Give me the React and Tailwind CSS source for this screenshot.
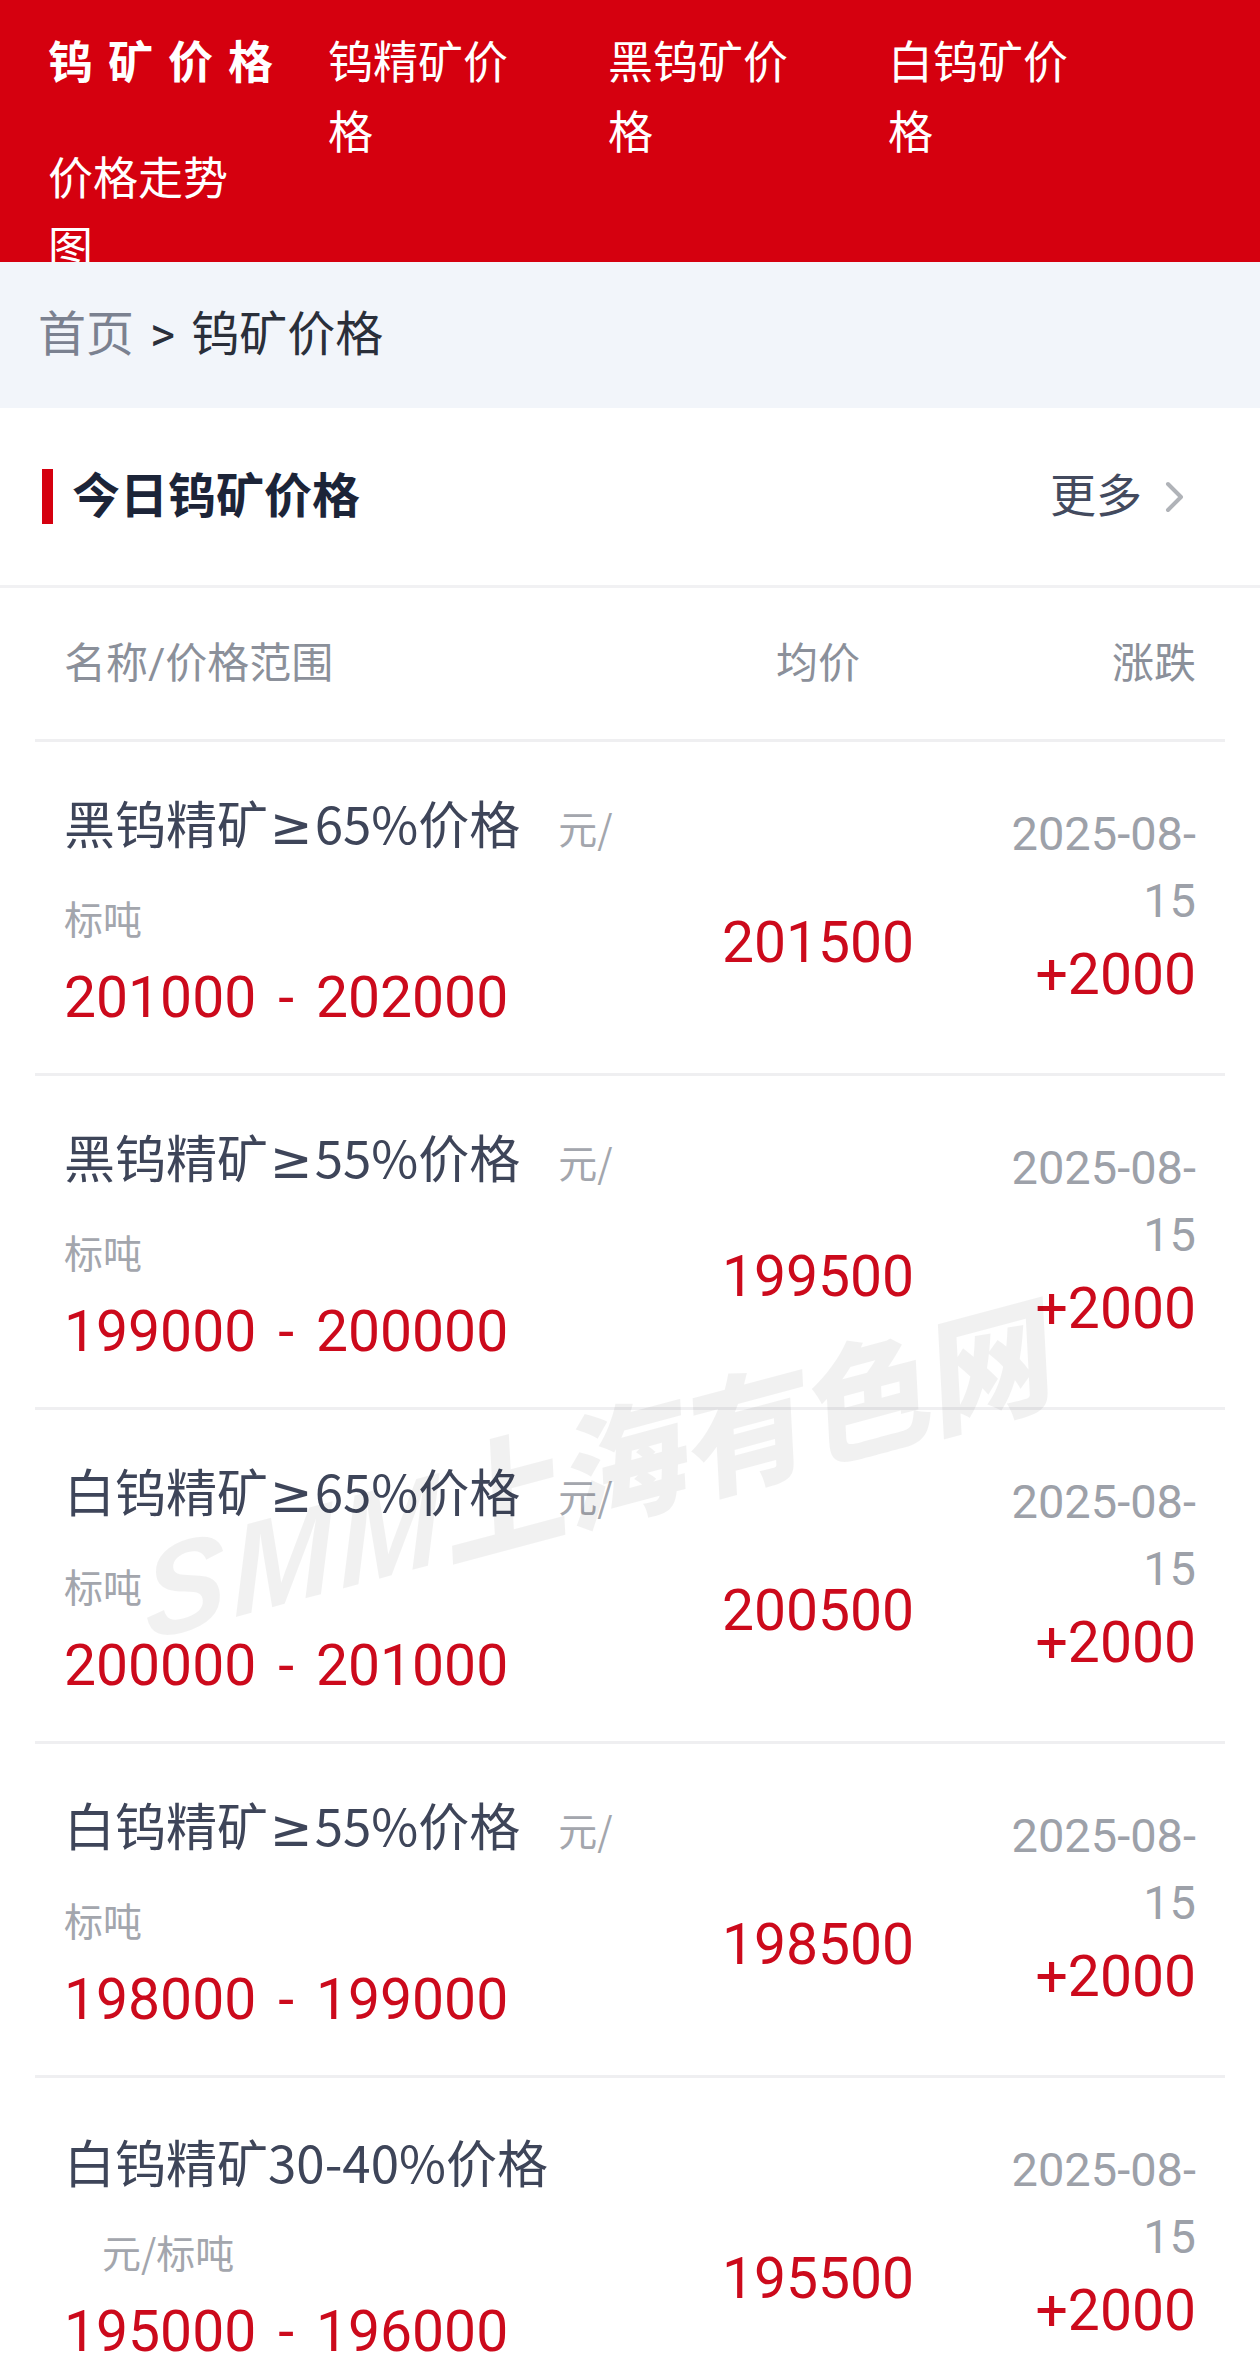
import React from "react";

const font = { fontFamily: 'Roboto, "Noto Sans CJK SC", "Noto Sans", sans-serif' };
const cjk = { fontFamily: '"Noto Sans CJK SC", "Noto Sans", sans-serif' };
const geFont = { fontFamily: '"DejaVu Sans", "Noto Sans", sans-serif' };

const navItems = ["钨精矿价格", "黑钨矿价格", "白钨矿价格", "价格走势图"];

const rows = [
  { pre: "黑钨精矿", ge: true, post: "65%价格", lo: "201000", hi: "202000", avg: "201500" },
  { pre: "黑钨精矿", ge: true, post: "55%价格", lo: "199000", hi: "200000", avg: "199500" },
  { pre: "白钨精矿", ge: true, post: "65%价格", lo: "200000", hi: "201000", avg: "200500" },
  { pre: "白钨精矿", ge: true, post: "55%价格", lo: "198000", hi: "199000", avg: "198500" },
  { pre: "白钨精矿", ge: false, post: "30-40%价格", lo: "195000", hi: "196000", avg: "195500" },
];

export default function App() {
  return (
    <div className="relative w-[1260px] bg-white overflow-hidden" style={font}>
      {/* Top nav */}
      <div className="h-[262px] overflow-hidden bg-[#d5000f] pt-[29px] pl-[48px]">
        <div className="flex flex-wrap">
          <div className="h-[116px] w-[220px] mr-[60px] whitespace-nowrap text-[45px] leading-[70px] font-bold tracking-[15px] text-white">
            钨矿价格
          </div>
          {navItems.map((t) => (
            <div
              key={t}
              className="h-[116px] w-[220px] mr-[60px] text-[45px] leading-[70px] text-white"
            >
              {t}
            </div>
          ))}
        </div>
      </div>

      {/* Breadcrumb */}
      <div className="flex h-[146px] items-center bg-[#f2f5fa] pl-[38px] text-[48px]">
        <span className="text-[#7b8190]">首页</span>
        <span className="mx-[16px] text-[#2a2f3a]">&gt;</span>
        <span className="text-[#2a2f3a]">钨矿价格</span>
      </div>

      {/* Section title */}
      <div className="flex h-[180px] items-center justify-between border-b-[3px] border-[#f1f1f3] pl-[42px] pr-[74px]">
        <div className="flex items-center">
          <div className="h-[55px] w-[11px] bg-[#d5000f]" />
          <div className="ml-[19px] text-[48px] font-bold text-[#1c2438]">今日钨矿价格</div>
        </div>
        <div className="flex items-center">
          <span className="text-[46px] text-[#434a5e]">更多</span>
          <svg className="ml-[22px]" width="22" height="32" viewBox="0 0 22 32" fill="none">
            <path d="M4 3 L17 16 L4 29" stroke="#b0b3b8" strokeWidth="4" strokeLinecap="round" strokeLinejoin="round" />
          </svg>
        </div>
      </div>

      {/* Table */}
      <div className="mx-[35px]">
        <div className="flex h-[154px] items-center border-b-[3px] border-[#efeff1] px-[29px] text-[42px] text-[#8b909a]">
          <div className="w-[556px]">名称/价格范围</div>
          <div className="flex-1 pl-[20px] text-center">均价</div>
          <div className="w-[200px] text-right">涨跌</div>
        </div>

        {rows.map((r) => (
          <div
            key={r.pre + r.post}
            className="flex h-[334px] items-center border-b-[3px] border-[#efeff1] px-[29px]"
          >
            <div className="w-[556px]">
              <div className="text-[51px] leading-[85px] text-[#3e4559]" style={cjk}>
                {r.pre}
                {r.ge && (
                  <span className="ml-[2px] mr-[2px]" style={geFont}>
                    ≥
                  </span>
                )}
                {r.post}
                <span className="ml-[38px] text-[39px] text-[#a3a6ad]">元/标吨</span>
              </div>
              <div className="whitespace-nowrap text-[57px] leading-[75px] text-[#cc0a1c]">
                {r.lo}
                <span className="mx-[22px]">-</span>
                {r.hi}
              </div>
            </div>
            <div className="mt-[70px] flex-1 pl-[20px] text-center text-[57px] leading-[84px] text-[#cc0a1c]">
              {r.avg}
            </div>
            <div className="w-[200px] text-right">
              <div className="text-[47px] leading-[67px] text-[#9da1a9]">2025-08-15</div>
              <div className="text-[57px] leading-[82px] text-[#cc0a1c]">+2000</div>
            </div>
          </div>
        ))}
      </div>

      {/* Watermark */}
      <div
        className="pointer-events-none absolute left-[128px] top-[1398px] origin-center -rotate-[15deg] -skew-x-[12deg] whitespace-nowrap text-[126px] font-black leading-[130px] text-black/[0.055]"
        style={{ fontFamily: '"Liberation Sans", "Noto Sans CJK SC", sans-serif' }}
      >
        <span className="italic tracking-[6px]">SMM</span>
        <span style={cjk}>上海有色网</span>
      </div>
    </div>
  );
}
